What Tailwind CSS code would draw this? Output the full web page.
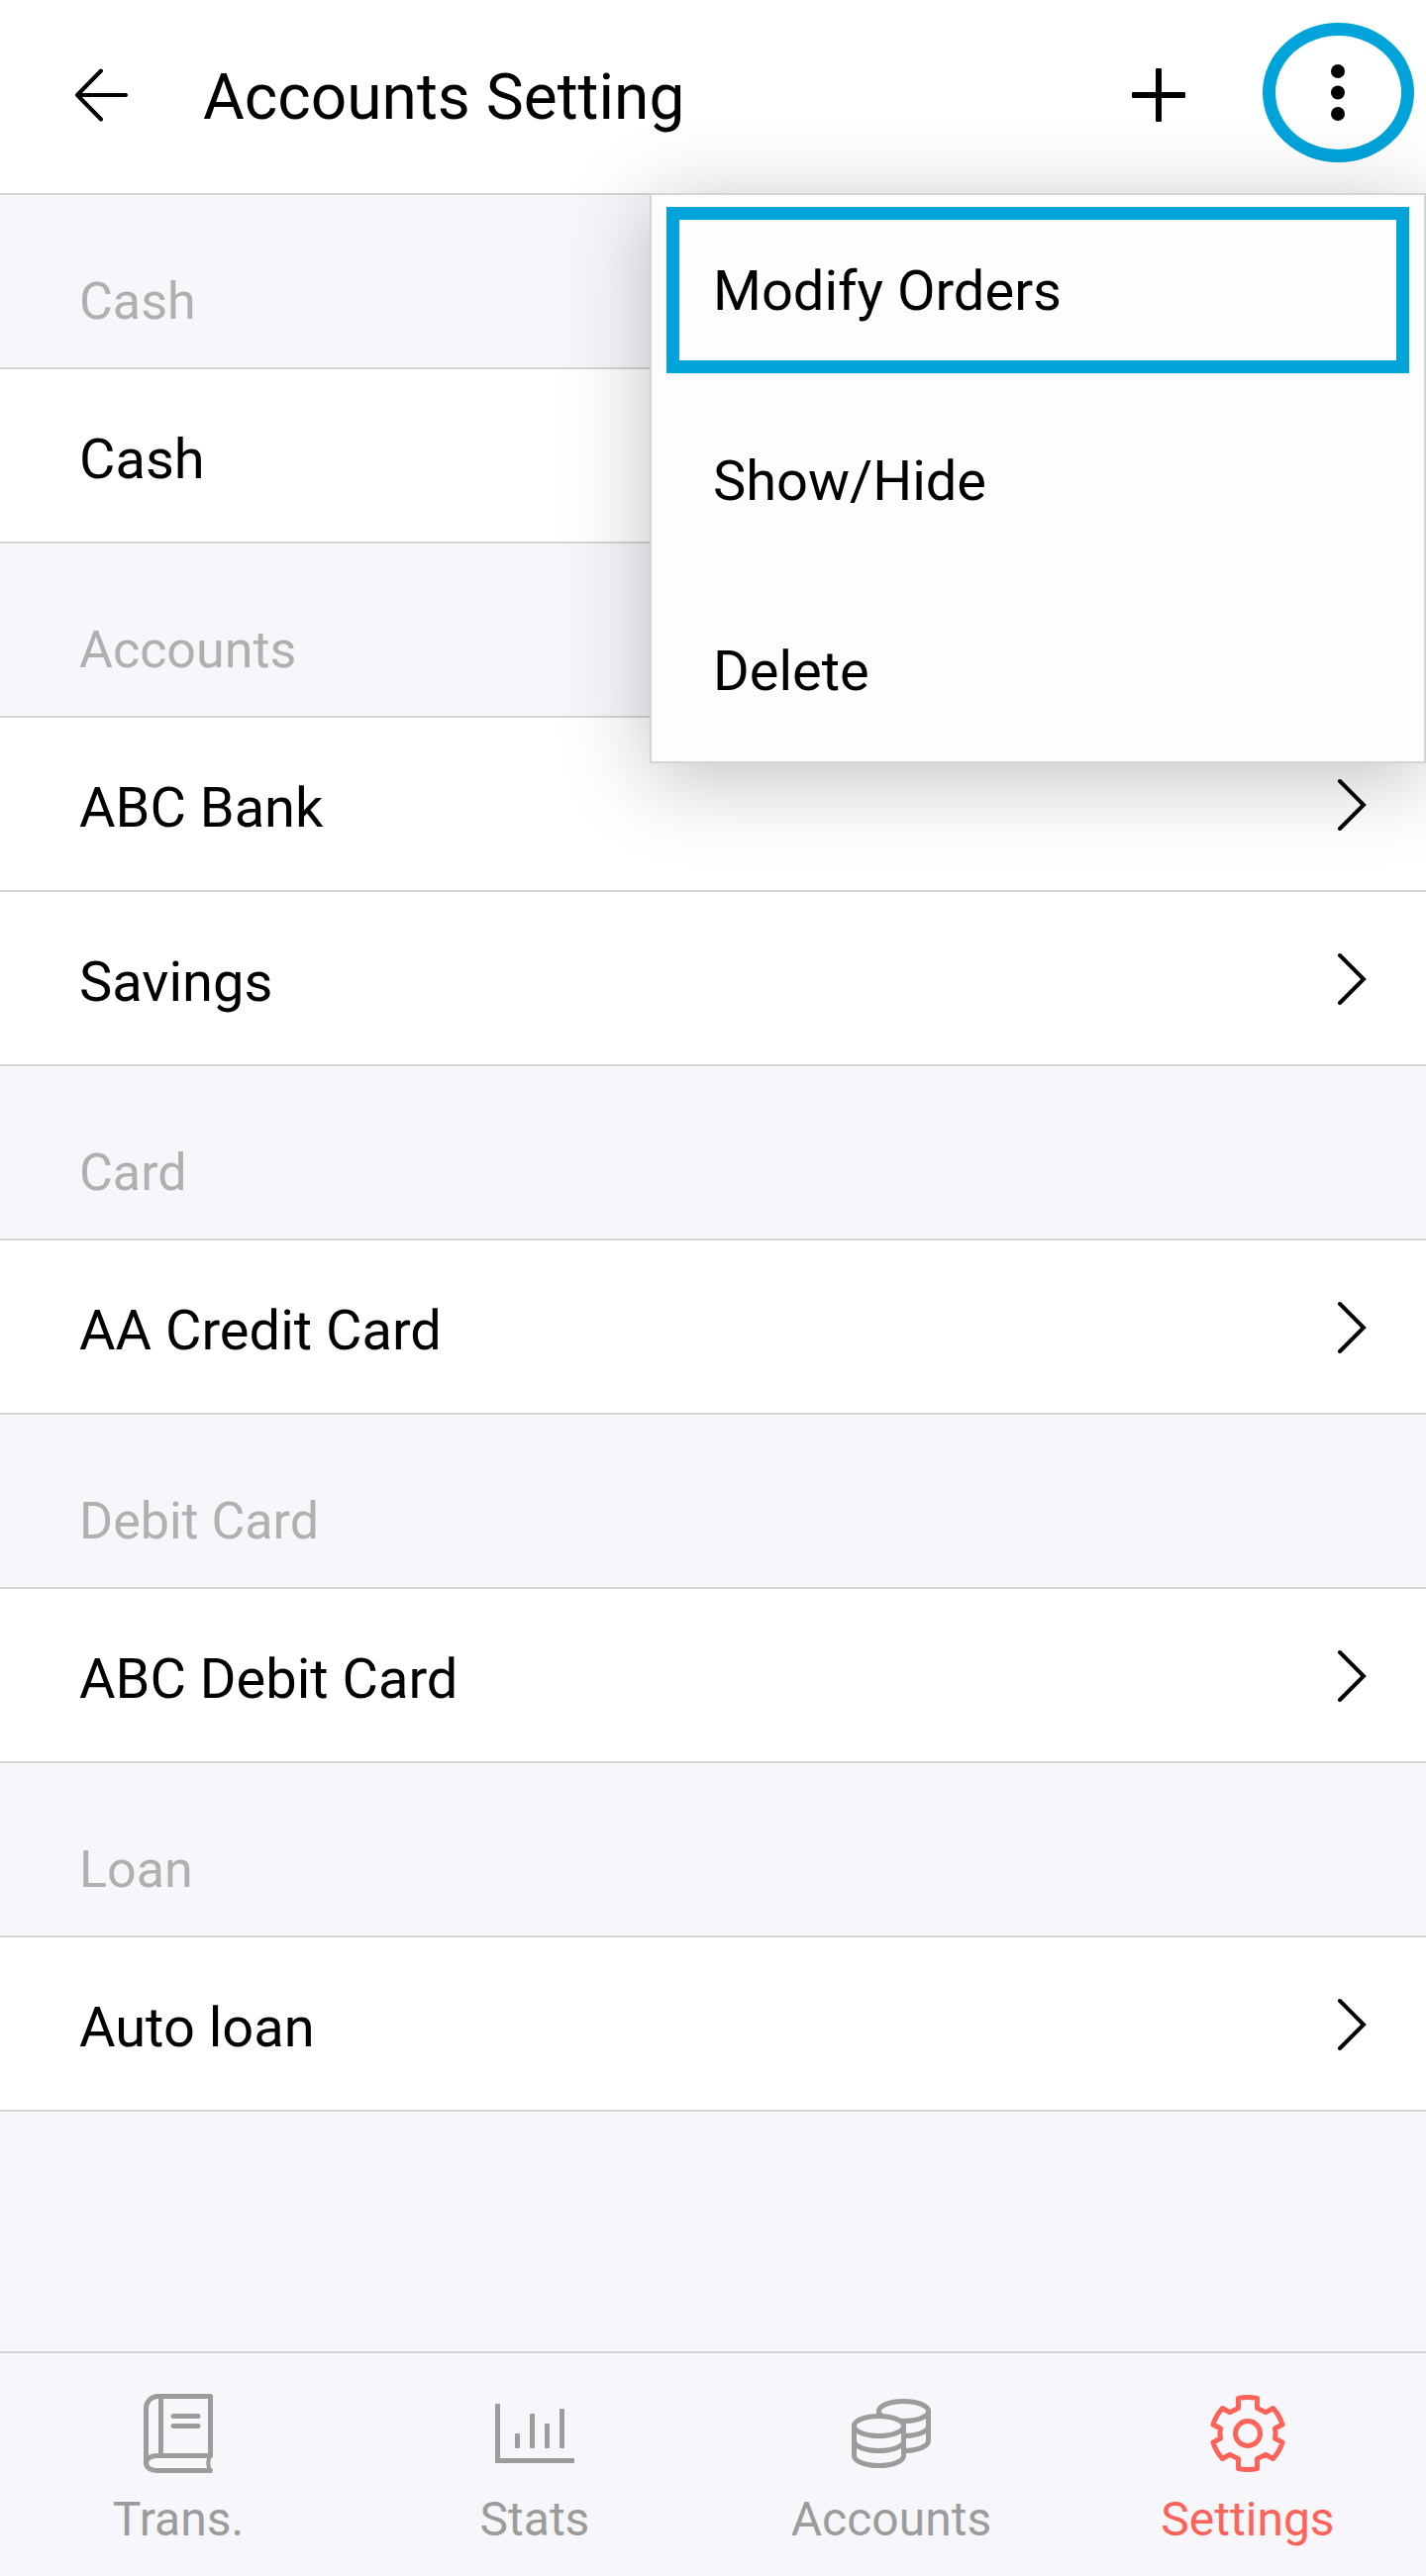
<!DOCTYPE html>
<html lang="en">
    <head>
        <meta charset="utf-8">
        <meta name="viewport" content="width=device-width, initial-scale=1">
        <title>Accounts Setting</title>
        <script src="https://cdn.jsdelivr.net/npm/@tailwindcss/browser@4"></script>
    </head>

    <body class="min-h-screen flex flex-col bg-[#f6f6fb] text-black text-[56px] leading-[64px] font-[Roboto,sans-serif]">
        <header class="relative z-10 h-[197px] flex items-center bg-white border-b-2 border-[#d4d4d6] pl-[75px] pr-3">
            <button aria-label="Back" class="mb-1 mr-[76px]">
                <svg class="size-[54px]" viewBox="0 0 54 54" fill="none" stroke="#000" stroke-width="4" stroke-linecap="round" stroke-linejoin="round"><path d="M52 27H3M27 2.500L3 27l24 24.500"/></svg>
            </button>
            <h1 class="flex-1 pt-0.5 text-[64px] leading-[72px]">Accounts Setting</h1>
            <button aria-label="Add account" class="mb-1 mr-[78px]">
                <svg class="size-[54px]" viewBox="0 0 54 54"><rect x="0" y="24" width="54" height="6" rx="1"/><rect x="24" y="0" width="6" height="54" rx="1"/></svg>
            </button>
            <button aria-label="More options" class="self-start mt-[23px] w-[153px] h-[141px] flex items-center justify-center rounded-[50%] border-[13px] border-[#00a3da]">
                <svg class="w-4 h-[60px]" viewBox="0 0 16 60"><circle cx="7" cy="8" r="7"/><circle cx="7" cy="29.500" r="7"/><circle cx="7" cy="51" r="7"/></svg>
            </button>

            <!-- dropdown -->
            <div class="absolute right-0 top-[195px] w-[784px] h-[576px] flex flex-col bg-[#fdfdfd] border-2 border-[#d4d4d6] shadow-[0_14px_80px_rgba(0,0,0,0.25)]">
                <button class="shrink-0 h-[168px] my-3 mx-[15px] px-[34px] pt-0.5 text-left border-[13px] border-[#00a3da]">Modify Orders</button>
                <button class="shrink-0 h-[192px] px-[62px] pt-0.5 text-left">Show/Hide</button>
                <button class="shrink-0 h-[192px] px-[62px] pt-0.5 text-left">Delete</button>
            </div>
        </header>

        <main class="flex-1">
            <section>
                <h2 class="h-[176px] flex items-center pt-[42px] px-20 border-b-2 border-[#d4d4d6] text-[52px] text-[#b0b0b0]">Cash</h2>
                <a href="#" class="h-[176px] flex items-center justify-between pl-20 pr-[60px] bg-white border-b-2 border-[#d4d4d6]"><span class="pt-2">Cash</span></a>
            </section>
            <section>
                <h2 class="h-[176px] flex items-center pt-[42px] px-20 border-b-2 border-[#d4d4d6] text-[52px] text-[#b0b0b0]">Accounts</h2>
                <a href="#" class="h-[176px] flex items-center justify-between pl-20 pr-[60px] bg-white border-b-2 border-[#d4d4d6]">
                    <span class="pt-2">ABC Bank</span>
                    <svg class="w-[30px] h-[54px]" viewBox="0 0 30 54" fill="none" stroke="#000" stroke-width="4" stroke-linecap="round"><path d="M3 4l24 24L3 52"/></svg>
                </a>
                <a href="#" class="h-[176px] flex items-center justify-between pl-20 pr-[60px] bg-white border-b-2 border-[#d4d4d6]">
                    <span class="pt-2">Savings</span>
                    <svg class="w-[30px] h-[54px]" viewBox="0 0 30 54" fill="none" stroke="#000" stroke-width="4" stroke-linecap="round"><path d="M3 4l24 24L3 52"/></svg>
                </a>
            </section>
            <section>
                <h2 class="h-[176px] flex items-center pt-[42px] px-20 border-b-2 border-[#d4d4d6] text-[52px] text-[#b0b0b0]">Card</h2>
                <a href="#" class="h-[176px] flex items-center justify-between pl-20 pr-[60px] bg-white border-b-2 border-[#d4d4d6]">
                    <span class="pt-2">AA Credit Card</span>
                    <svg class="w-[30px] h-[54px]" viewBox="0 0 30 54" fill="none" stroke="#000" stroke-width="4" stroke-linecap="round"><path d="M3 4l24 24L3 52"/></svg>
                </a>
            </section>
            <section>
                <h2 class="h-[176px] flex items-center pt-[42px] px-20 border-b-2 border-[#d4d4d6] text-[52px] text-[#b0b0b0]">Debit Card</h2>
                <a href="#" class="h-[176px] flex items-center justify-between pl-20 pr-[60px] bg-white border-b-2 border-[#d4d4d6]">
                    <span class="pt-2">ABC Debit Card</span>
                    <svg class="w-[30px] h-[54px]" viewBox="0 0 30 54" fill="none" stroke="#000" stroke-width="4" stroke-linecap="round"><path d="M3 4l24 24L3 52"/></svg>
                </a>
            </section>
            <section>
                <h2 class="h-[176px] flex items-center pt-[42px] px-20 border-b-2 border-[#d4d4d6] text-[52px] text-[#b0b0b0]">Loan</h2>
                <a href="#" class="h-[176px] flex items-center justify-between pl-20 pr-[60px] bg-white border-b-2 border-[#d4d4d6]">
                    <span class="pt-2">Auto loan</span>
                    <svg class="w-[30px] h-[54px]" viewBox="0 0 30 54" fill="none" stroke="#000" stroke-width="4" stroke-linecap="round"><path d="M3 4l24 24L3 52"/></svg>
                </a>
            </section>
        </main>

        <nav class="grid grid-cols-4 pt-[41px] pb-[25px] border-t-2 border-[#d4d4d6] text-[48px] text-[#9c9c9c]">
            <a href="#" class="flex flex-col items-center gap-[15px]">
                <svg class="size-20" viewBox="0 0 80 80" fill="none" stroke="currentColor" stroke-width="5" stroke-linecap="round" stroke-linejoin="round">
                    <path d="M7.500 70V14.500a12 12 0 0 1 12-12H72.500V62.500H17.500a10 7.500 0 0 0 0 15H72.500"/>
                    <path d="M22.500 2.500V62.500M35 22.500H60M35 32.500H60"/>
                    <path d="M72 63Q68.500 70 72 77" stroke-width="4"/>
                </svg>
                Trans.
            </a>
            <a href="#" class="flex flex-col items-center gap-[15px]">
                <svg class="size-20" viewBox="0 0 80 80" fill="currentColor">
                    <rect x="0" y="10" width="5" height="60" rx="1"/>
                    <rect x="0" y="65" width="80" height="5" rx="1"/>
                    <rect x="20" y="40" width="5" height="15" rx="1"/>
                    <rect x="35" y="20" width="5" height="35" rx="1"/>
                    <rect x="50" y="30" width="5" height="25" rx="1"/>
                    <rect x="65" y="15" width="5" height="40" rx="1"/>
                </svg>
                Stats
            </a>
            <a href="#" class="flex flex-col items-center gap-[15px]">
                <svg class="size-20" viewBox="0 0 80 80" fill="none" stroke="currentColor" stroke-width="5">
                    <!-- back stack -->
                    <ellipse cx="52.500" cy="17.500" rx="25" ry="10"/>
                    <path d="M27.500 17.500V47.500a25 10 0 0 0 50 0V17.500M27.500 32.500a25 10 0 0 0 50 0"/>
                    <!-- front stack -->
                    <path fill="#f6f6fb" d="M2.500 32.500a25 10 0 0 1 50 0V62.500a25 10 0 0 1-50 0Z"/>
                    <path d="M2.500 32.500a25 10 0 0 0 50 0M2.500 47.500a25 10 0 0 0 50 0"/>
                </svg>
                Accounts
            </a>
            <a href="#" class="flex flex-col items-center gap-[15px] text-[#ff6259]" aria-current="page">
                <svg class="size-20" viewBox="0 0 80 80" fill="none" stroke="currentColor" stroke-width="5" stroke-linejoin="round">
                    <circle cx="40" cy="40" r="12.500"/>
                    <path d="M30.500 4.500Q40 2.500 49.500 4.500V14.500L58.300 18.700L65.500 14.500Q72 21.500 75 31L67.500 35Q68.600 40 67.500 45L75 49Q72 58.500 65.500 65.500L58.300 61.300L49.500 65.500V75.500Q40 77.500 30.500 75.500V65.500L21.700 61.300L14.500 65.500Q8 58.500 5 49L12.500 45Q11.400 40 12.500 35L5 31Q8 21.500 14.500 14.500L21.700 18.700L30.500 14.500Z"/>
                </svg>
                Settings
            </a>
        </nav>
    </body>
</html>
